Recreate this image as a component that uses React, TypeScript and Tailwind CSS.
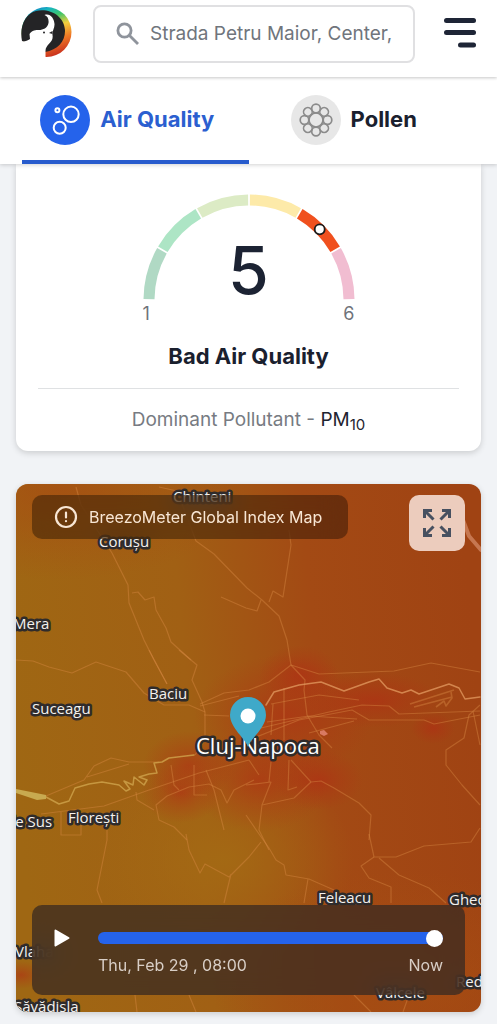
import clsx from "clsx";
import { useState } from "react";

const GAUGE_COLORS = [
  "#b0d9c4",
  "#ade5c5",
  "#dcebc5",
  "#fdeaa9",
  "#f0501e",
  "#f1bdd1",
];

const ROADS = [
  "M77 487L82 505L113 553L129 585L130 603L145 640L155 660L168 684",
  "M133 593L139 592L146 600L155 597L157 610L167 628L172 642L192 660",
  "M160 487L178 491L197 541L215 554L248 588L263 600L280 616L288 640L292 665",
  "M222 597L247 608L258 611L262 600M270 602L274 591L284 597L292 545L290 530",
  "M17 660L34 661L50 667L73 673L97 662L127 672L145 693L165 705L190 705L206 712",
  "M150 650L168 684M180 650L198 665L193 680L203 702L206 712V740L196 755",
  "M201 704L225 693L250 690L270 682L292 665L320 674L395 671L432 663L481 672",
  "M205 715L230 716M201 706L240 696",
  "M47 796L85 780L95 766L112 758L130 762L160 762M88 777L130 764",
  "M42 814L105 806L150 790L200 773L250 760M62 812V835H82V824",
  "M137 792L138 800L155 810M108 830V840L105 855L98 890L103 903",
  "M188 840L175 827L160 820L157 805L168 796L190 787L210 784L222 790L228 803L235 790L255 780",
  "M207 770L215 790L225 830M195 765V795H208M172 765L175 785L180 790",
  "M187 834L190 850L201 873L206 864L230 877L250 857L262 842M232 874L225 903",
  "M292 665L306 680L305 690L308 715L320 735L333 748M285 688V740M274 704L272 735",
  "M255 738L300 720L353 710L370 720L425 720L435 724L481 715",
  "M262 728L330 712L363 705L390 706L400 714L481 711",
  "M272 704L320 695L360 700M268 722L310 716L358 719M310 733L355 721",
  "M481 705L470 715L465 738L447 750V765L463 785L481 805M474 711L481 745",
  "M292 760L312 782L322 781L335 788L360 803L372 815L370 840",
  "M312 782L295 798L263 805M247 785L272 782L263 805L260 830L270 850",
  "M250 760L260 775M272 762L270 782M290 760L289 790L298 787",
  "M247 815L260 834L270 848L277 860L285 865L287 875L310 879L335 890M309 879L305 903",
  "M370 834L375 857L397 857L425 846L472 842L481 828",
  "M375 857L362 866L370 878L392 887V903M380 858L400 875L430 888L447 903",
  "M355 995L372 1012M136 995L138 1012M190 995L197 1012M410 995L404 1012",
];

const PLACES = [
  { name: "Chinteni", x: 174, y: 502 },
  { name: "Corușu", x: 100, y: 547 },
  { name: "Mera", x: 14, y: 629 },
  { name: "Baciu", x: 150, y: 699 },
  { name: "Suceagu", x: 33, y: 714 },
  { name: "Florești", x: 69, y: 823 },
  { name: "de Sus", x: 7, y: 827 },
  { name: "Feleacu", x: 319, y: 903 },
  { name: "Gheorgheni", x: 450, y: 905 },
  { name: "Vlaha", x: 16, y: 957 },
  { name: "Rediu", x: 457, y: 987 },
  { name: "Vâlcele", x: 377, y: 998 },
  { name: "Săvădisla", x: 15, y: 1012 },
];

const HOTSPOTS = [
  { cx: 285, cy: 715, rx: 90, ry: 60 },
  { cx: 300, cy: 675, rx: 40, ry: 30 },
  { cx: 375, cy: 700, rx: 66, ry: 28 },
  { cx: 182, cy: 793, rx: 40, ry: 30 },
  { cx: 190, cy: 765, rx: 46, ry: 34 },
  { cx: 260, cy: 780, rx: 70, ry: 52 },
  { cx: 320, cy: 780, rx: 44, ry: 30 },
  { cx: 434, cy: 728, rx: 22, ry: 16 },
  { cx: 22, cy: 975, rx: 24, ry: 14 },
];

const point = (r: number, deg: number) => {
  const a = (deg * Math.PI) / 180;
  return `${(106 - r * Math.cos(a)).toFixed(2)} ${(106 - r * Math.sin(a)).toFixed(2)}`;
};

const Logo = () => (
  <svg viewBox="0 0 51 52" className="h-[52px] w-[51px]" aria-hidden="true">
    <defs>
      <linearGradient id="ring" x1="0.25" y1="0" x2="0.6" y2="1">
        <stop offset="0" stopColor="#1479c4" />
        <stop offset="0.12" stopColor="#16b5c0" />
        <stop offset="0.28" stopColor="#3fc46a" />
        <stop offset="0.48" stopColor="#f3cf3e" />
        <stop offset="0.72" stopColor="#ef7a26" />
        <stop offset="1" stopColor="#c92f1d" />
      </linearGradient>
    </defs>
    <circle cx="25.500" cy="26" r="25" fill="url(#ring)" />
    <path
      d="M1 35C-2 20 5 7 15 5C29 2 43 10 44 24C44.500 35 37 44 24 46Z"
      fill="#242426"
    />
    <path
      d="M23.500 9C29 7 33 12 33.500 18C33.800 22 31 25 31.500 29C33 37 24.500 38 24.500 45V52H-1V35C3 36 6 35 9 33L8.500 28C11 24 15 24 18 24C22 24 26.500 22 27.500 17C28 13 26.500 10 23.500 9Z"
      fill="white"
    />
    <circle cx="23" cy="26.500" r="1" fill="#242426" />
    <path d="M28 27L31.500 25V28Z" fill="#242426" />
  </svg>
);

const Header = () => {
  const [query, setQuery] = useState("Strada Petru Maior, Center, Cluj-Napoca");

  return (
    <header className="relative z-20 flex h-[77px] items-start gap-[21px] bg-white px-[21px] pt-[5px] shadow-[0_1px_3px_rgba(0,0,0,0.22)]">
      <a href="#home" aria-label="Home" className="mt-px shrink-0">
        <Logo />
      </a>
      <label className="flex h-[58px] min-w-0 flex-1 items-center gap-[10px] rounded-lg border-2 border-[#e0e0e2] pr-[20px] pl-[21px]">
        <svg
          viewBox="0 0 24 24"
          className="size-6 shrink-0 text-[#8f949c]"
          fill="none"
          stroke="currentColor"
          strokeWidth="2.800"
          aria-hidden="true"
        >
          <circle cx="8.500" cy="8.500" r="6.600" />
          <path d="M13.500 13.500L22 22" />
        </svg>
        <input
          type="text"
          aria-label="Search location"
          value={query}
          onChange={(e) => setQuery(e.target.value)}
          className="w-full min-w-0 bg-transparent text-[19px] text-[#70757c] outline-none"
        />
      </label>
      <button type="button" aria-label="Menu" className="mt-3 ml-2 shrink-0">
        <svg viewBox="0 0 32 32" className="size-8" fill="#1e2536">
          <rect y="1" width="32" height="5" rx="2.500" />
          <rect y="13" width="32" height="5" rx="2.500" />
          <rect x="14" y="25.500" width="18" height="5" rx="2.500" />
        </svg>
      </button>
    </header>
  );
};

const AirIcon = () => (
  <svg viewBox="0 0 50 50" className="size-[50px]" aria-hidden="true">
    <circle cx="25" cy="25" r="25" fill="#2563eb" />
    <g fill="none" stroke="white" strokeWidth="2">
      <circle cx="31" cy="19.300" r="7.700" />
      <circle cx="19.700" cy="32.700" r="6" />
      <circle cx="17.400" cy="15.200" r="2" />
    </g>
  </svg>
);

const PollenIcon = () => (
  <svg viewBox="0 0 50 50" className="size-[50px]" aria-hidden="true">
    <circle cx="25" cy="25" r="25" fill="#e7e7e7" />
    <g fill="none" stroke="#8b8b8b" strokeWidth="1.700">
      <circle cx="25" cy="25" r="7" />
      {[0, 45, 90, 135, 180, 225, 270, 315].map((deg) => (
        <circle
          key={deg}
          cx="25"
          cy="13.500"
          r="4.300"
          transform={`rotate(${deg} 25 25)`}
        />
      ))}
    </g>
  </svg>
);

const TABS = [
  { label: "Air Quality", icon: <AirIcon /> },
  { label: "Pollen", icon: <PollenIcon /> },
];

const Tabs = () => {
  const [active, setActive] = useState("Air Quality");

  return (
    <nav className="relative z-10 grid grid-cols-2 bg-white px-[22px] shadow-[0_1px_4px_rgba(0,0,0,0.18)]">
      {TABS.map(({ label, icon }) => (
        <button
          key={label}
          type="button"
          onClick={() => setActive(label)}
          className={clsx(
            "flex h-[87px] items-center justify-center gap-[10px] border-b-4 pt-0.5 pr-4 text-[22px] font-bold",
            active === label
              ? "border-[#285ccd] text-[#2b5fd0]"
              : "border-transparent text-[#1a202e]"
          )}
        >
          {icon}
          {label}
        </button>
      ))}
    </nav>
  );
};

const IndexCard = () => (
  <section className="rounded-b-xl bg-white px-[22px] pt-[30px] pb-4 text-center shadow-[0_2px_6px_rgba(0,0,0,0.16)]">
    <div className="mx-auto grid w-[212px]">
      <svg viewBox="0 0 212 106" className="col-start-1 row-start-1 w-full">
        {GAUGE_COLORS.map((color, i) => (
          <path
            key={color}
            d={`M${point(100, i * 30 + 0.5)}A100 100 0 0 1 ${point(100, i * 30 + 29.5)}`}
            fill="none"
            stroke={color}
            strokeWidth="11"
          />
        ))}
        <circle
          cx="176.700"
          cy="35.300"
          r="5"
          fill="white"
          stroke="#1b1b1b"
          strokeWidth="1.800"
        />
      </svg>
      <p className="col-start-1 row-start-1 self-end text-[66px] leading-[60px] font-medium text-[#1c2333]">
        5
      </p>
    </div>
    <div className="mx-auto flex w-[212px] justify-between text-[18px] leading-7 text-[#6f737a]">
      <span>1</span>
      <span>6</span>
    </div>
    <h2 className="mt-3 text-[22px] leading-8 font-bold text-[#1a202e]">
      Bad Air Quality
    </h2>
    <hr className="mt-4 border-[#dfe1e3]" />
    <p className="mt-4 text-[19px] leading-[30px] text-[#777b82]">
      Dominant Pollutant -{" "}
      <span className="text-[#1f2430]">
        PM<sub className="text-[15px]">10</sub>
      </span>
    </p>
  </section>
);

const MapCanvas = () => (
  <svg
    viewBox="17 484 465 528"
    preserveAspectRatio="xMidYMid slice"
    className="absolute inset-0 size-full"
    fontFamily="'Open Sans', sans-serif"
  >
    <defs>
      <linearGradient id="base" x1="0" y1="0.55" x2="1" y2="0.45">
        <stop offset="0" stopColor="#9f6713" />
        <stop offset="0.38" stopColor="#a16014" />
        <stop offset="0.66" stopColor="#a34a14" />
        <stop offset="1" stopColor="#a04313" />
      </linearGradient>
      <radialGradient id="amber">
        <stop offset="0" stopColor="#a46c14" stopOpacity="0.8" />
        <stop offset="1" stopColor="#a46c14" stopOpacity="0" />
      </radialGradient>
      <radialGradient id="rust">
        <stop offset="0" stopColor="#a64e12" stopOpacity="0.8" />
        <stop offset="1" stopColor="#a64e12" stopOpacity="0" />
      </radialGradient>
      <radialGradient id="hot">
        <stop offset="0" stopColor="#b22a14" stopOpacity="0.55" />
        <stop offset="0.5" stopColor="#b22a14" stopOpacity="0.25" />
        <stop offset="1" stopColor="#b22a14" stopOpacity="0" />
      </radialGradient>
    </defs>
    <rect x="17" y="484" width="465" height="528" fill="url(#base)" />
    <ellipse cx="60" cy="490" rx="190" ry="90" fill="url(#rust)" />
    <ellipse cx="225" cy="860" rx="130" ry="100" fill="url(#amber)" />
    <ellipse cx="400" cy="980" rx="190" ry="110" fill="url(#rust)" />
    {HOTSPOTS.map((spot) => (
      <ellipse key={`${spot.cx}-${spot.cy}`} {...spot} fill="url(#hot)" />
    ))}
    <g fill="none" stroke="#d98a45" strokeOpacity="0.42" strokeLinejoin="round">
      {ROADS.map((d) => (
        <path key={d} d={d} strokeWidth="1.200" />
      ))}
      <path
        d="M411 704L455 690M415 707L453 697M437 707L445 701L447 706L453 698L452 692"
        strokeWidth="1.600"
      />
    </g>
    <g fill="none" strokeLinejoin="round" strokeLinecap="round">
      <path
        d="M47 797L60 804L70 801L76 788L90 784L103 782L120 785L127 791L131 789L125 781L134 785L135 777L145 785L148 780L140 777L150 774L158 773L155 763L163 762L170 758L195 755"
        stroke="#d0a44c"
        strokeOpacity="0.8"
        strokeWidth="1.500"
      />
      <path
        d="M267 705L275 692L300 685L322 682L345 691L370 682L380 679L388 688L403 693L412 690L420 694L450 684L460 688L466 699L481 697"
        stroke="#e0965c"
        strokeOpacity="0.8"
        strokeWidth="1.500"
      />
      <path
        d="M464 520L470 536L482 550"
        stroke="#cf8560"
        strokeOpacity="0.8"
        strokeWidth="4"
      />
    </g>
    <path d="M17 789L47 795V799L38 800L17 793Z" fill="#c8aa50" />
    <path d="M321 731L325 730L329 734L325 736L321 734Z" fill="#d97a62" />
    <g
      fill="#f4f1ee"
      stroke="#2f2b2b"
      strokeWidth="5"
      strokeLinejoin="round"
      paintOrder="stroke"
      fontSize="15"
    >
      {PLACES.map(({ name, x, y }) => (
        <text key={name} x={x} y={y}>
          {name}
        </text>
      ))}
      <text x="197" y="754" fontSize="22" fontWeight="500" fill="white">
        Cluj-Napoca
      </text>
    </g>
    <path
      d="M249 747C247 739 231 728 231 715A18 18 0 0 1 267 715C267 728 251 739 249 747Z"
      fill="#3fa9c9"
    />
    <circle cx="249" cy="716" r="7.500" fill="white" />
  </svg>
);

const MapCard = () => {
  const [hour, setHour] = useState(24);

  return (
    <section className="relative mt-[33px] flex min-h-[528px] flex-col justify-between overflow-hidden rounded-xl px-4 pt-[11px] pb-[17px] shadow-[0_2px_6px_rgba(0,0,0,0.16)]">
      <MapCanvas />
      <div className="relative flex items-start justify-between">
        <div className="flex h-11 items-center gap-[11px] rounded-[10px] bg-black/35 pr-[26px] pl-[22px] text-[16px] text-[#f8e6d4] backdrop-blur-md">
          <svg
            viewBox="0 0 24 24"
            className="size-6"
            fill="none"
            stroke="currentColor"
            strokeWidth="2.200"
            strokeLinecap="round"
            aria-hidden="true"
          >
            <circle cx="12" cy="12" r="10" />
            <path d="M12 7.500V12.500M12 16V16.200" />
          </svg>
          BreezoMeter Global Index Map
        </div>
        <button
          type="button"
          aria-label="Full screen"
          className="flex size-14 items-center justify-center rounded-[10px] bg-[#ecccbd]"
        >
          <svg
            viewBox="0 0 28 28"
            className="size-7"
            fill="none"
            stroke="#475060"
            strokeWidth="3"
            aria-hidden="true"
          >
            <path d="M1.500 9V1.500H9M1.500 1.500L10.500 10.500" />
            <path d="M19 1.500H26.500V9M26.500 1.500L17.500 10.500" />
            <path d="M1.500 19V26.500H9M1.500 26.500L10.500 17.500" />
            <path d="M19 26.500H26.500V19M26.500 26.500L17.500 17.500" />
          </svg>
        </button>
      </div>
      <div className="relative flex h-[90px] items-start gap-[27px] rounded-[10px] bg-[#382922]/75 pt-[23px] pr-[22px] pl-[21px] backdrop-blur-md">
        <button type="button" aria-label="Play" className="shrink-0">
          <svg viewBox="0 0 18 20" className="h-5 w-[18px]">
            <path
              d="M2.500 2.500L15.500 10L2.500 17.500Z"
              fill="white"
              stroke="white"
              strokeWidth="2"
              strokeLinejoin="round"
            />
          </svg>
        </button>
        <div className="min-w-0 flex-1 pt-1">
          <input
            type="range"
            aria-label="Forecast time"
            min={0}
            max={24}
            value={hour}
            onChange={(e) => setHour(Number(e.target.value))}
            className="block h-3 w-full appearance-none rounded-full bg-[#2563eb] [&::-webkit-slider-thumb]:size-[17px] [&::-webkit-slider-thumb]:appearance-none [&::-webkit-slider-thumb]:rounded-full [&::-webkit-slider-thumb]:bg-white"
          />
          <div className="mt-[9px] flex justify-between text-[16px] leading-6 text-[#d8cec6]">
            <span>Thu, Feb 29 , 08:00</span>
            <span>Now</span>
          </div>
        </div>
      </div>
    </section>
  );
};

const App = () => (
  <div className="min-h-screen bg-[#f1f3f6] font-[Inter,sans-serif]">
    <Header />
    <Tabs />
    <main className="px-4 pb-3">
      <IndexCard />
      <MapCard />
    </main>
  </div>
);

export default App;
